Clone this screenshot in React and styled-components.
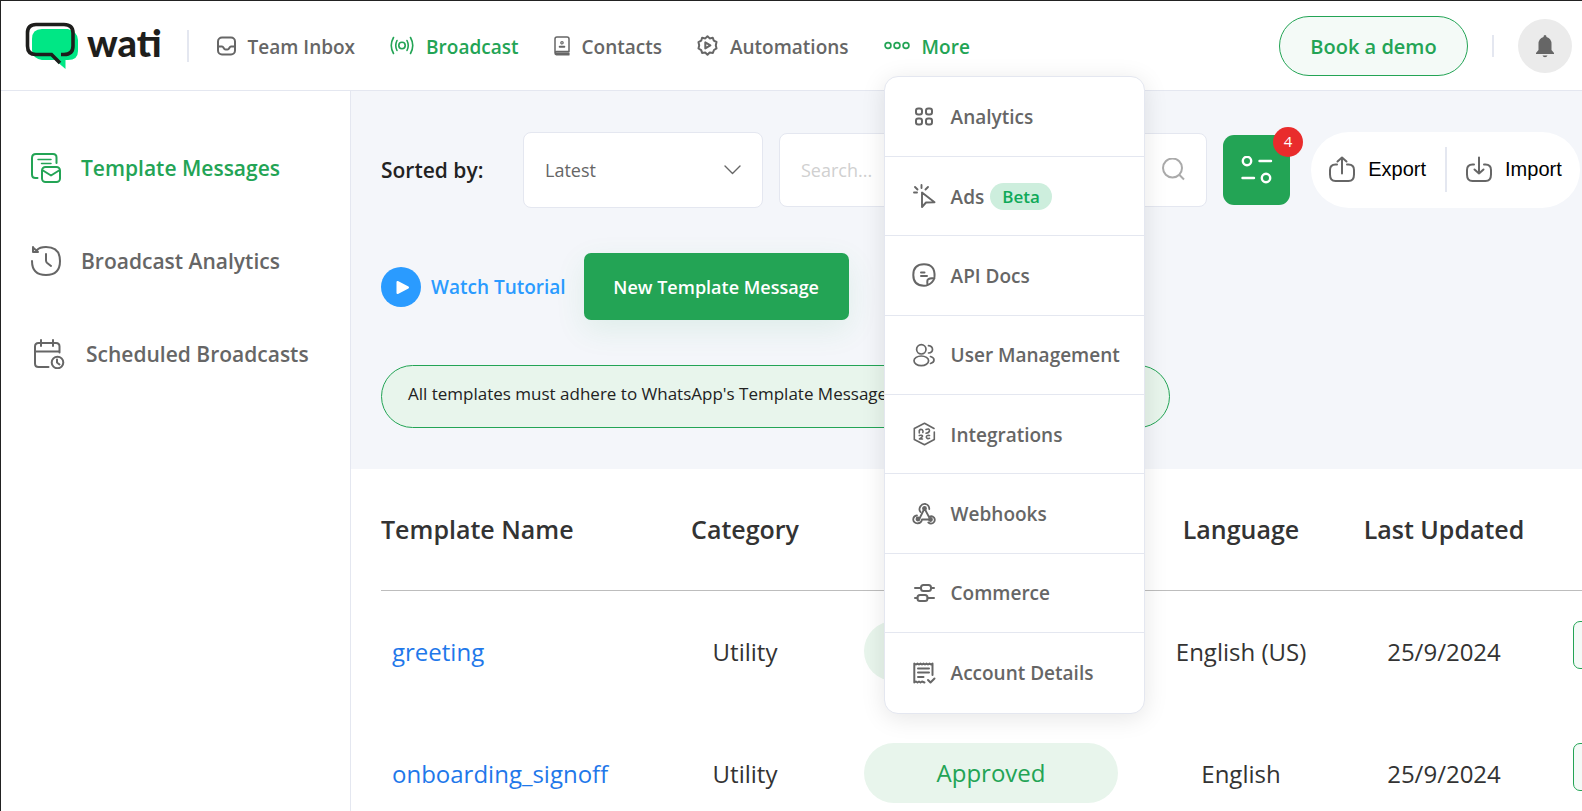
import React, { useState } from 'react';
import styled, { createGlobalStyle } from 'styled-components';

const GREEN = '#23a455';
const GRAY = '#666666';
const LINE = '#e4e7f0';

const GlobalStyle = createGlobalStyle`
	* {
		box-sizing: border-box;
	}
	body {
		margin: 0;
		background: #fff;
		color: #333;
		font-family: 'Open Sans', 'Noto Sans', sans-serif;
	}
	button, input, select {
		font-family: inherit;
	}
	a {
		text-decoration: none;
	}
`;

const Page = styled.div`
	display: flex;
	flex-direction: column;
	height: 100vh;
	overflow: hidden;
	border-top: 1px solid #222;
	border-left: 1px solid #222;
`;

const Header = styled.header`
	display: flex;
	align-items: center;
	flex-shrink: 0;
	height: 90px;
	padding: 0 10px 0 24px;
	border-bottom: 1px solid ${LINE};
`;

const Logo = styled.a`
	display: flex;
	align-items: center;
	gap: 8px;
	margin-right: 25px;
	color: #1e1e1c;
	font-family: Lato, sans-serif;
	font-size: 38px;
	font-weight: 900;
	line-height: 48px;
	span {
		padding-bottom: 8px;
	}
`;

const Divider = styled.span`
	flex-shrink: 0;
	width: 2px;
	height: ${(props) => props.$height}px;
	background: ${LINE};
`;

const Nav = styled.nav`
	display: flex;
	align-items: center;
	gap: 35px;
	margin-left: 27px;
`;

const NavItem = styled.a`
	display: flex;
	align-items: center;
	gap: 12px;
	padding: 0;
	border: 0;
	background: none;
	color: ${(props) => (props.$active ? GREEN : GRAY)};
	font-size: 19px;
	font-weight: 600;
	line-height: 32px;
	white-space: nowrap;
	cursor: pointer;
	span {
		padding-top: 2px;
	}
`;

const MoreWrap = styled.div`
	position: relative;
`;

const Menu = styled.div`
	position: absolute;
	z-index: 10;
	top: 47px;
	left: 0;
	display: grid;
	grid-auto-rows: 1fr;
	width: 261px;
	height: 638px;
	padding-top: 1px;
	overflow: hidden;
	border: 1px solid ${LINE};
	border-radius: 14px;
	background: #fff;
	box-shadow: 0 4px 24px rgba(0, 0, 0, 0.1);
`;

const MenuItem = styled.a`
	display: flex;
	align-items: center;
	gap: 15px;
	padding: 0 20px 0 27px;
	border-bottom: 1px solid ${LINE};
	color: ${GRAY};
	font-size: 19px;
	font-weight: 600;
	white-space: nowrap;
	&:last-child {
		border-bottom: 0;
	}
`;

const MenuLabel = styled.span`
	display: flex;
	align-items: center;
	gap: 6px;
	padding-top: 1px;
`;

const Beta = styled.span`
	padding: 0 12px;
	border-radius: 14px;
	background: #cdeedd;
	color: #0fa958;
	font-size: 17px;
	line-height: 27px;
`;

const HeaderRight = styled.div`
	display: flex;
	align-items: center;
	gap: 24px;
	margin-left: auto;
`;

const DemoButton = styled.button`
	width: 189px;
	height: 60px;
	padding: 2px 0 0;
	border: 1px solid ${GREEN};
	border-radius: 30px;
	background: #f4faf7;
	color: ${GREEN};
	font-size: 20px;
	font-weight: 600;
`;

const BellButton = styled.button`
	display: flex;
	align-items: center;
	justify-content: center;
	width: 54px;
	height: 54px;
	padding: 0;
	border: 0;
	border-radius: 50%;
	background: #ebebeb;
`;

const Body = styled.div`
	display: flex;
	flex: 1;
	min-height: 0;
`;

const Sidebar = styled.aside`
	display: flex;
	flex-direction: column;
	flex-shrink: 0;
	width: 350px;
	padding: 30px 0 0 30px;
	border-right: 1px solid ${LINE};
`;

const SideLink = styled.a`
	display: flex;
	align-items: center;
	gap: 20px;
	height: 93px;
	color: ${(props) => (props.$active ? GREEN : GRAY)};
	font-size: 21px;
	font-weight: 600;
	white-space: nowrap;
`;

const Main = styled.main`
	flex: 1;
	min-width: 0;
	overflow: hidden;
`;

const Toolbar = styled.section`
	display: flex;
	flex-direction: column;
	align-items: flex-start;
	gap: 45px;
	padding: 41px 0 41px 30px;
	background: #f4f6fa;
`;

const Row = styled.div`
	display: flex;
	align-items: center;
	gap: ${(props) => props.$gap}px;
	width: 100%;
	padding-right: ${(props) => props.$end || 0}px;
`;

const SortLabel = styled.label`
	width: 126px;
	color: #222;
	font-size: 21px;
	font-weight: 600;
	white-space: nowrap;
`;

const SelectBox = styled.div`
	display: grid;
	flex-shrink: 0;
	align-items: center;
	width: 240px;
	height: 76px;
	border: 1px solid ${LINE};
	border-radius: 8px;
	background: #fff;
	color: ${GRAY};
	select,
	svg {
		grid-area: 1 / 1;
	}
	svg {
		justify-self: end;
		margin-right: 21px;
		pointer-events: none;
	}
`;

const Select = styled.select`
	width: 100%;
	height: 100%;
	padding: 0 21px;
	border: 0;
	background: transparent;
	appearance: none;
	color: ${GRAY};
	font-size: 18px;
`;

const SearchBox = styled.label`
	display: flex;
	flex: 1;
	align-items: center;
	min-width: 0;
	height: 74px;
	padding: 0 21px;
	border: 1px solid ${LINE};
	border-radius: 8px;
	background: #fff;
`;

const SearchInput = styled.input`
	flex: 1;
	min-width: 0;
	padding: 0;
	border: 0;
	outline: 0;
	background: transparent;
	font-size: 18px;
	&::placeholder {
		color: #d0d0d0;
		opacity: 1;
	}
`;

const FilterButton = styled.button`
	position: relative;
	display: flex;
	flex-shrink: 0;
	align-items: center;
	justify-content: center;
	width: 67px;
	height: 70px;
	padding: 0;
	border: 0;
	border-radius: 11px;
	background: ${GREEN};
`;

const Badge = styled.span`
	position: absolute;
	top: -8px;
	right: -13px;
	width: 30px;
	height: 30px;
	border-radius: 50%;
	background: #e92c2c;
	color: #fff;
	font-size: 15px;
	line-height: 28px;
`;

const TransferGroup = styled.div`
	display: flex;
	flex-shrink: 0;
	align-items: center;
	justify-content: center;
	gap: 19px;
	width: 269px;
	height: 76px;
	margin-left: 5px;
	padding-bottom: 2px;
	border-radius: 38px;
	background: #fff;
`;

const TransferButton = styled.button`
	display: flex;
	align-items: center;
	gap: 13px;
	padding: 0;
	border: 0;
	background: none;
	color: #000;
	font-family: 'Liberation Sans', Arial, sans-serif;
	font-size: 20px;
	svg {
		color: ${GRAY};
	}
`;

const TutorialLink = styled.a`
	display: flex;
	align-items: center;
	gap: 10px;
	color: #2a9bff;
	font-size: 19px;
	font-weight: 600;
	white-space: nowrap;
`;

const NewButton = styled.button`
	width: 265px;
	height: 67px;
	border: 0;
	border-radius: 7px;
	background: ${GREEN};
	box-shadow: 0 10px 30px rgba(35, 164, 85, 0.1);
	color: #fff;
	font-size: 18px;
	font-weight: 600;
	white-space: nowrap;
`;

const Notice = styled.p`
	width: 789px;
	height: 63px;
	margin: 0;
	padding: 0 26px;
	border: 1px solid ${GREEN};
	border-radius: 32px;
	background: #e8f5ec;
	color: #222;
	font-size: 17px;
	line-height: 56px;
	white-space: nowrap;
`;

const Table = styled.table`
	width: calc(100% - 30px);
	min-width: 1400px;
	margin-left: 30px;
	border-collapse: collapse;
	table-layout: fixed;
`;

const Th = styled.th`
	width: ${(props) => (props.$width ? `${props.$width}px` : 'auto')};
	height: 121px;
	padding: 0;
	border-bottom: 1px solid #bdbdbd;
	font-size: 25px;
	font-weight: 600;
	text-align: ${(props) => props.$align || 'center'};
`;

const Td = styled.td`
	height: 122px;
	padding: 0;
	font-size: 24px;
	text-align: center;
	&:first-child {
		padding-left: 11px;
		text-align: left;
	}
	&:last-child {
		padding-left: 25px;
		text-align: left;
	}
`;

const NameLink = styled.a`
	color: #1f78ea;
`;

const Status = styled.span`
	display: inline-block;
	width: 254px;
	border-radius: 30px;
	background: #e8f5ec;
	color: ${GREEN};
	line-height: 60px;
	vertical-align: middle;
`;

const ActionButton = styled.button`
	display: block;
	width: 56px;
	height: 48px;
	margin-bottom: 12px;
	border: 1px solid ${GREEN};
	border-radius: 7px;
	background: #f4faf7;
`;

const Svg = styled.svg`
	flex-shrink: 0;
	fill: none;
	stroke: currentColor;
	stroke-linecap: round;
	stroke-linejoin: round;
`;

const Icon = ({ w, h = w, stroke = 2, children }) => (
	<Svg width={w} height={h} viewBox={`0 0 ${w} ${h}`} strokeWidth={stroke} aria-hidden="true">
		{children}
	</Svg>
);

const LogoMark = () => (
	<svg width="54" height="48" viewBox="0 0 54 48" fill="none" aria-hidden="true">
		<path d="M17 7H43Q53 10 53 18V29Q53 38 43 38H40.500V47L30 38H17Q7 36 7 28V17Q7 7 17 7Z" fill="#00e785" />
		<path
			d="M36 32.500H39Q48 32.500 48 24V11Q48 2.500 39 2.500H11Q2.500 2.500 2.500 11V24Q2.500 32.500 11 32.500H26.500L35 41"
			stroke="#1e1e1c"
			strokeWidth="3.600"
		/>
	</svg>
);

const InboxIcon = () => (
	<Icon w={20}>
		<rect x="2" y="1.500" width="17" height="17" rx="4" />
		<path d="M2 10.500h4c1 0 1.200.6 1.700 1.500.5 1 1 1.500 1.800 1.500h2c.8 0 1.300-.5 1.800-1.500.5-.9.7-1.500 1.700-1.500h4" />
	</Icon>
);

const BroadcastIcon = () => (
	<Icon w={24} h={20} stroke={1.6}>
		<circle cx="12" cy="9.500" r="3.200" />
		<path d="M7 4.500Q4.500 9.500 7 14.500M17 4.500Q19.500 9.500 17 14.500M3.500 1.500Q-1 9.500 3.500 17.500M20.500 1.500Q25 9.500 20.500 17.500" />
	</Icon>
);

const ContactsIcon = () => (
	<Icon w={16} h={20} stroke={1.5}>
		<path d="M15 15.500V3Q15 1 13 1H3Q1 1 1 3V17M15 15.500H2.500Q1 15.500 1 17T2.500 18.800H15M2 17.200H15" />
		<circle cx="8" cy="6.800" r="1.200" strokeWidth="1.200" />
		<path d="M5.700 10.800h4.600" strokeWidth="2" />
	</Icon>
);

const AutomationIcon = () => (
	<Icon w={21} stroke={2}>
		<path d="M10.500 1.300L12.700 3.400L15.800 2.800L16.800 5.600L19.500 7L18.800 10.200L19.500 13.400L17 15L15.900 17.900L12.700 17.500L10.500 19.800L8.200 17.500L5.100 17.900L4.200 15.100L1.500 13.500L2.200 10.300L1.500 7.200L4.200 5.700L5.100 2.800L8.300 3.400Z" />
		<path d="M8.300 7.400V13.400L13.400 10.400Z" />
	</Icon>
);

const MoreIcon = () => (
	<Icon w={26} h={20} stroke={1.7}>
		<circle cx="4" cy="9.500" r="2.900" />
		<circle cx="13" cy="9.500" r="2.900" />
		<circle cx="22" cy="9.500" r="2.900" />
	</Icon>
);

const BellIcon = () => (
	<svg width="20" height="24" viewBox="0 0 20 24" fill={GRAY} aria-hidden="true">
		<path d="M10 1Q11.500 1 11.500 3Q16.500 4.500 16.500 10V16L19 19V20H1V19L3.500 16V10Q3.500 4.500 8.500 3Q8.500 1 10 1ZM7.500 21.500H12.500Q12 23.300 10 23.300T7.500 21.500Z" />
	</svg>
);

const TemplateIcon = () => (
	<Icon w={30}>
		<path d="M25.500 10V4.500Q25.500 1 22 1H5Q1 1 1 5V21.500Q1 25 4.500 25H6.500" />
		<path d="M7 6.500H20M10.500 10.500H20" strokeWidth="1.500" />
		<rect x="11" y="14" width="18" height="15" rx="3.500" />
		<path d="M12 17.500L20 22.500L28 17.500" />
	</Icon>
);

const HistoryIcon = () => (
	<Icon w={30}>
		<path d="M6 4Q8.500 1 15 1Q29 1 29 15T15 29T1 15" />
		<path d="M2 1V6H7L2 1.500" />
		<path d="M15 8V14.500Q15 16 16.200 17L20 20" />
	</Icon>
);

const ScheduleIcon = () => (
	<Icon w={35} h={30}>
		<path d="M28.500 13.500V7.500Q28.500 4 25 4H7.500Q4 4 4 7.500V24.500Q4 28 7.500 28H17.500M4 12.500H28.500M10 1V7M22 1V7" />
		<circle cx="26.500" cy="23.500" r="5.800" />
		<path d="M26 20.500V23.500L28.500 25.500" />
	</Icon>
);

const AnalyticsIcon = () => (
	<Icon w={24} stroke={2}>
		<rect x="4" y="3.500" width="6" height="6" rx="2.200" />
		<rect x="14" y="3.500" width="6" height="6" rx="2.200" />
		<rect x="4" y="13.500" width="6" height="6" rx="2.200" />
		<rect x="14" y="13.500" width="6" height="6" rx="2.200" />
	</Icon>
);

const AdsIcon = () => (
	<Icon w={24} stroke={1.9}>
		<path d="M10 8.500V23L14 18.500L22.500 18.300ZM9.500 1V4M3 3L5.500 5.500M16 3L13.500 5.500M2 8.500H5" />
	</Icon>
);

const DocsIcon = () => (
	<Icon w={24} stroke={2}>
		<path d="M22.500 13.500Q23.200 1.300 12 1.300Q1.300 1.300 1.300 12T12 22.700Q14.500 22.700 15.500 22Q15 19.500 15.500 17Q17 15 22.500 15Q20.500 20.500 15.500 22" />
		<path d="M9 9.500H12.500M9 13H15" />
	</Icon>
);

const UsersIcon = () => (
	<Icon w={24} stroke={1.7}>
		<circle cx="9.300" cy="6.300" r="4.700" />
		<ellipse cx="9.300" cy="17.800" rx="7.300" ry="4.800" />
		<path d="M16.500 2.700Q20.500 3.300 20.500 6.500T16.500 10M18.500 13.500Q22 14.500 22 17T18.500 20.500" />
	</Icon>
);

const IntegrationsIcon = () => (
	<Icon w={24} stroke={1.6}>
		<path d="M22 6.500L12.500 1.200L2.300 6.500V17.500L12.500 22.800L22.300 17.500V10" />
		<path d="M7.300 11V8.500Q8.500 6.800 10.300 7.800Q11.600 9 10.800 10.500M14 7.500Q17.500 6 17.500 8.800Q17 11 14 11.200M7.300 13.500Q10.300 12.800 10.500 14.200Q10 15.500 7.500 17H10.500M17.500 13.500Q14.500 13 14.300 15Q15 17.300 17.500 16.300" />
	</Icon>
);

const WebhooksIcon = () => (
	<Icon w={24} stroke={1.8}>
		<path d="M8.500 10Q6.500 7.500 8.300 4.500Q10.300 1.500 13.500 2Q17.300 3 17.300 7M12.500 6.500L17 15Q20 13.300 22 15.500Q24 19 21 21Q18.500 22.300 16.300 20.500M12.500 6.500L7.500 16.500M5 13.500Q1.300 14 1.200 17.500Q1.500 21 5.500 21.300Q9.500 21 10 17.500H18" />
		<circle cx="12.500" cy="6.500" r="1.500" fill="currentColor" />
		<circle cx="6" cy="17" r="1.500" fill="currentColor" />
		<circle cx="18.500" cy="17.500" r="1.500" fill="currentColor" />
	</Icon>
);

const CommerceIcon = () => (
	<Icon w={24} stroke={2}>
		<rect x="9" y="4" width="10" height="6" rx="2.500" />
		<rect x="5.500" y="14" width="10" height="6" rx="2.500" />
		<path d="M3 7H9M19 7H22M3 17H5.500M15.500 17H22" />
	</Icon>
);

const AccountIcon = () => (
	<Icon w={24} stroke={2}>
		<path d="M20.500 14V2.500L19 3.500L17.500 2.500L16 3.500L14.500 2.500L13 3.500L11.500 2.500L10 3.500L8.500 2.500L7 3.500L5.500 2.500L4 3.500L2.300 2.500V21.500L4 20.500L5.500 21.500L7 20.500L8.500 21.500L10 20.500L12.500 21.500" />
		<path d="M6 7.500H17M6 11.500H17M6 16H11.500M16 19L18.500 21.500L22.500 17.500" />
	</Icon>
);

const ChevronIcon = () => (
	<Icon w={17} h={10} stroke={1.400}>
		<path d="M1 1L8.500 8.500L16 1" />
	</Icon>
);

const SearchIcon = () => (
	<svg width="24" height="24" viewBox="0 0 24 24" fill="none" stroke="#aaa" strokeWidth="2" aria-hidden="true">
		<circle cx="11.500" cy="10" r="9.500" />
		<path d="M18 16.500L23 21.500" />
	</svg>
);

const FilterIcon = () => (
	<svg width="32" height="28" viewBox="0 0 32 28" fill="none" stroke="#fff" strokeWidth="2.400" strokeLinecap="round" aria-hidden="true">
		<circle cx="6" cy="5" r="4.200" />
		<circle cx="25" cy="22" r="4.200" />
		<path d="M18.500 5H30M1.500 22H13" />
	</svg>
);

const TransferIcon = ({ up }) => (
	<Icon w={26}>
		<path d="M8 8.500H6.500Q1 8.500 1 14V18.500Q1 25 6.500 25H19.500Q25 25 25 18.500V14Q25 8.500 19.500 8.500H18" />
		<path d={up ? 'M13 17.500V1.500M8.500 5.500L13 1.500L17.500 5.500' : 'M13 1.500V17.500M8.500 13.500L13 17.500L17.500 13.500'} />
	</Icon>
);

const PlayIcon = () => (
	<svg width="40" height="40" viewBox="0 0 40 40" aria-hidden="true">
		<circle cx="20" cy="20" r="20" fill="#2a9bff" />
		<path d="M16.500 15V26L27 20.500Z" fill="#fff" stroke="#fff" strokeWidth="2" strokeLinejoin="round" />
	</svg>
);

const navItems = [
	{ label: 'Team Inbox', icon: <InboxIcon /> },
	{ label: 'Broadcast', icon: <BroadcastIcon />, active: true },
	{ label: 'Contacts', icon: <ContactsIcon /> },
	{ label: 'Automations', icon: <AutomationIcon /> },
];

const menuItems = [
	{ label: 'Analytics', icon: <AnalyticsIcon /> },
	{ label: 'Ads', icon: <AdsIcon />, beta: true },
	{ label: 'API Docs', icon: <DocsIcon /> },
	{ label: 'User Management', icon: <UsersIcon /> },
	{ label: 'Integrations', icon: <IntegrationsIcon /> },
	{ label: 'Webhooks', icon: <WebhooksIcon /> },
	{ label: 'Commerce', icon: <CommerceIcon /> },
	{ label: 'Account Details', icon: <AccountIcon /> },
];

const sideItems = [
	{ label: 'Template Messages', icon: <TemplateIcon />, active: true },
	{ label: 'Broadcast Analytics', icon: <HistoryIcon /> },
	{ label: 'Scheduled Broadcasts', icon: <ScheduleIcon /> },
];

const templates = [
	{ name: 'greeting', category: 'Utility', status: 'Approved', language: 'English (US)', updated: '25/9/2024' },
	{ name: 'onboarding_signoff', category: 'Utility', status: 'Approved', language: 'English', updated: '25/9/2024' },
];

const App = () => {
	const [open, setOpen] = useState(true);
	const [search, setSearch] = useState('');

	return (
		<Page>
			<GlobalStyle />
			<Header>
				<Logo href="#">
					<LogoMark />
					<span>wati</span>
				</Logo>
				<Divider $height={32} />
				<Nav>
					{navItems.map((item) => (
						<NavItem key={item.label} href="#" $active={item.active}>
							{item.icon}
							<span>{item.label}</span>
						</NavItem>
					))}
					<MoreWrap>
						<NavItem as="button" type="button" $active aria-expanded={open} onClick={() => setOpen(!open)}>
							<MoreIcon />
							<span>More</span>
						</NavItem>
						{open && (
							<Menu>
								{menuItems.map((item) => (
									<MenuItem key={item.label} href="#">
										{item.icon}
										<MenuLabel>
											{item.label}
											{item.beta && <Beta>Beta</Beta>}
										</MenuLabel>
									</MenuItem>
								))}
							</Menu>
						)}
					</MoreWrap>
				</Nav>
				<HeaderRight>
					<DemoButton type="button">Book a demo</DemoButton>
					<Divider $height={22} />
					<BellButton type="button" aria-label="Notifications">
						<BellIcon />
					</BellButton>
				</HeaderRight>
			</Header>

			<Body>
				<Sidebar>
					{sideItems.map((item) => (
						<SideLink key={item.label} href="#" $active={item.active}>
							{item.icon}
							{item.label}
						</SideLink>
					))}
				</Sidebar>

				<Main>
					<Toolbar>
						<Row $gap={16} $end={2}>
							<SortLabel htmlFor="sort">Sorted by:</SortLabel>
							<SelectBox>
								<Select id="sort" defaultValue="latest">
									<option value="latest">Latest</option>
									<option value="oldest">Oldest</option>
								</Select>
								<ChevronIcon />
							</SelectBox>
							<SearchBox>
								<SearchInput
									placeholder="Search..."
									aria-label="Search"
									value={search}
									onChange={(e) => setSearch(e.target.value)}
								/>
								<SearchIcon />
							</SearchBox>
							<FilterButton type="button" aria-label="Filters">
								<FilterIcon />
								<Badge>4</Badge>
							</FilterButton>
							<TransferGroup>
								<TransferButton type="button">
									<TransferIcon up />
									Export
								</TransferButton>
								<Divider $height={45} />
								<TransferButton type="button">
									<TransferIcon />
									Import
								</TransferButton>
							</TransferGroup>
						</Row>
						<Row $gap={18}>
							<TutorialLink href="#">
								<PlayIcon />
								Watch Tutorial
							</TutorialLink>
							<NewButton type="button">New Template Message</NewButton>
						</Row>
						<Notice>All templates must adhere to WhatsApp's Template Message Guidelines.</Notice>
					</Toolbar>

					<Table>
						<thead>
							<tr>
								<Th $width={269} $align="left">Template Name</Th>
								<Th $width={190}>Category</Th>
								<Th $width={302}>Status</Th>
								<Th $width={198}>Language</Th>
								<Th $width={208}>Last Updated</Th>
								<Th />
							</tr>
						</thead>
						<tbody>
							{templates.map((row) => (
								<tr key={row.name}>
									<Td>
										<NameLink href="#">{row.name}</NameLink>
									</Td>
									<Td>{row.category}</Td>
									<Td>
										<Status>{row.status}</Status>
									</Td>
									<Td>{row.language}</Td>
									<Td>{row.updated}</Td>
									<Td>
										<ActionButton type="button" aria-label="Actions" />
									</Td>
								</tr>
							))}
						</tbody>
					</Table>
				</Main>
			</Body>
		</Page>
	);
};

export default App;
